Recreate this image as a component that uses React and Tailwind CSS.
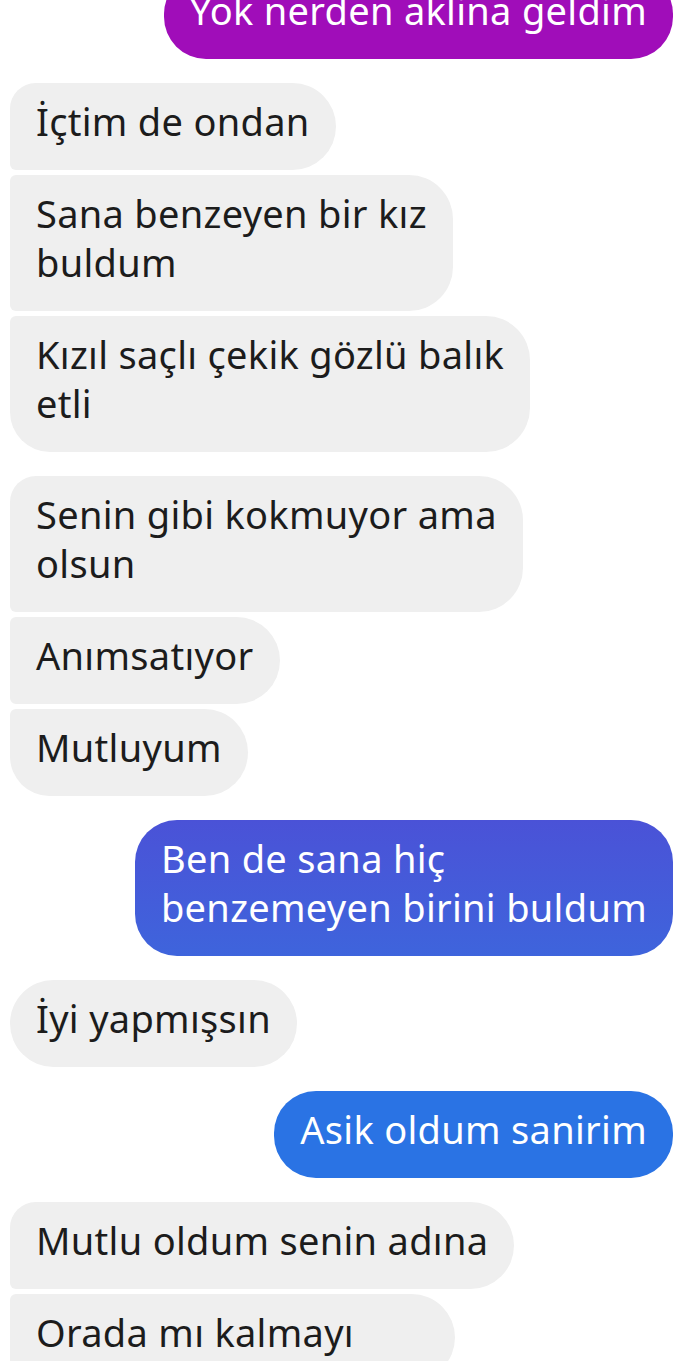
import React from 'react';

const messages = [
  { id: 1, side: 'me', color: 'purple', lines: ['Yok nerden aklina geldim'], shape: 'single' },
  { id: 2, side: 'them', lines: ['İçtim de ondan'], shape: 'first' },
  { id: 3, side: 'them', lines: ['Sana benzeyen bir kız', 'buldum'], shape: 'middle' },
  { id: 4, side: 'them', lines: ['Kızıl saçlı çekik gözlü balık', 'etli'], shape: 'last' },
  { id: 5, side: 'them', lines: ['Senin gibi kokmuyor ama', 'olsun'], shape: 'first' },
  { id: 6, side: 'them', lines: ['Anımsatıyor'], shape: 'middle' },
  { id: 7, side: 'them', lines: ['Mutluyum'], shape: 'last' },
  { id: 8, side: 'me', color: 'indigo', lines: ['Ben de sana hiç', 'benzemeyen birini buldum'], shape: 'single' },
  { id: 9, side: 'them', lines: ['İyi yapmışsın'], shape: 'single' },
  { id: 10, side: 'me', color: 'blue', lines: ['Asik oldum sanirim'], shape: 'single' },
  { id: 11, side: 'them', lines: ['Mutlu oldum senin adına'], shape: 'first' },
  // continues below the fold, the bubble is wider than its first line
  { id: 12, side: 'them', lines: ['Orada mı kalmayı'], shape: 'middle', width: 'w-[445px]' },
];

// left-side corner radii per position in a group
const themCorners = {
  single: 'rounded-[44px]',
  first: 'rounded-r-[44px] rounded-tl-[26px] rounded-bl-[6px]',
  middle: 'rounded-r-[44px] rounded-l-[6px]',
  last: 'rounded-r-[44px] rounded-tl-[6px] rounded-bl-[40px]',
};

const meColors = {
  purple: 'bg-[#a00db9] text-white',
  indigo: 'bg-gradient-to-b from-[#4a52d7] to-[#3e64dc] text-white',
  blue: 'bg-[#2a73e4] text-white',
};

const Bubble = ({ msg }) => {
  const isMe = msg.side === 'me';
  const cls = isMe
    ? `${meColors[msg.color]} rounded-[42px]`
    : `bg-[#efefef] text-[#1c1c1c] ${themCorners[msg.shape]}`;

  return (
    <div className={`flex ${isMe ? 'justify-end' : 'justify-start'}`}>
      <div className={`${cls} ${msg.width || ''} px-[26px] pt-[14px] pb-[24px] text-[38px] leading-[49px] tracking-[0.3px] whitespace-nowrap`}>
        {msg.lines.map((line, i) => (
          <div key={i}>{line}</div>
        ))}
      </div>
    </div>
  );
};

export default function App() {
  // group spacing: 5px inside a group, 24px between groups
  const gapBefore = (idx) => {
    if (idx === 0) return '';
    const prev = messages[idx - 1];
    const cur = messages[idx];
    const sameGroup = prev.side === cur.side && (cur.shape === 'middle' || cur.shape === 'last');
    return sameGroup ? 'mt-[5px]' : 'mt-[24px]';
  };

  return (
    <div
      className="w-[690px] h-[1361px] overflow-hidden bg-white"
      style={{ fontFamily: '"Noto Sans", sans-serif' }}
    >
      <div className="pl-[10px] pr-[17px] -mt-[28px]">
        {messages.map((msg, idx) => (
          <div key={msg.id} className={gapBefore(idx)}>
            <Bubble msg={msg} />
          </div>
        ))}
      </div>
    </div>
  );
}
